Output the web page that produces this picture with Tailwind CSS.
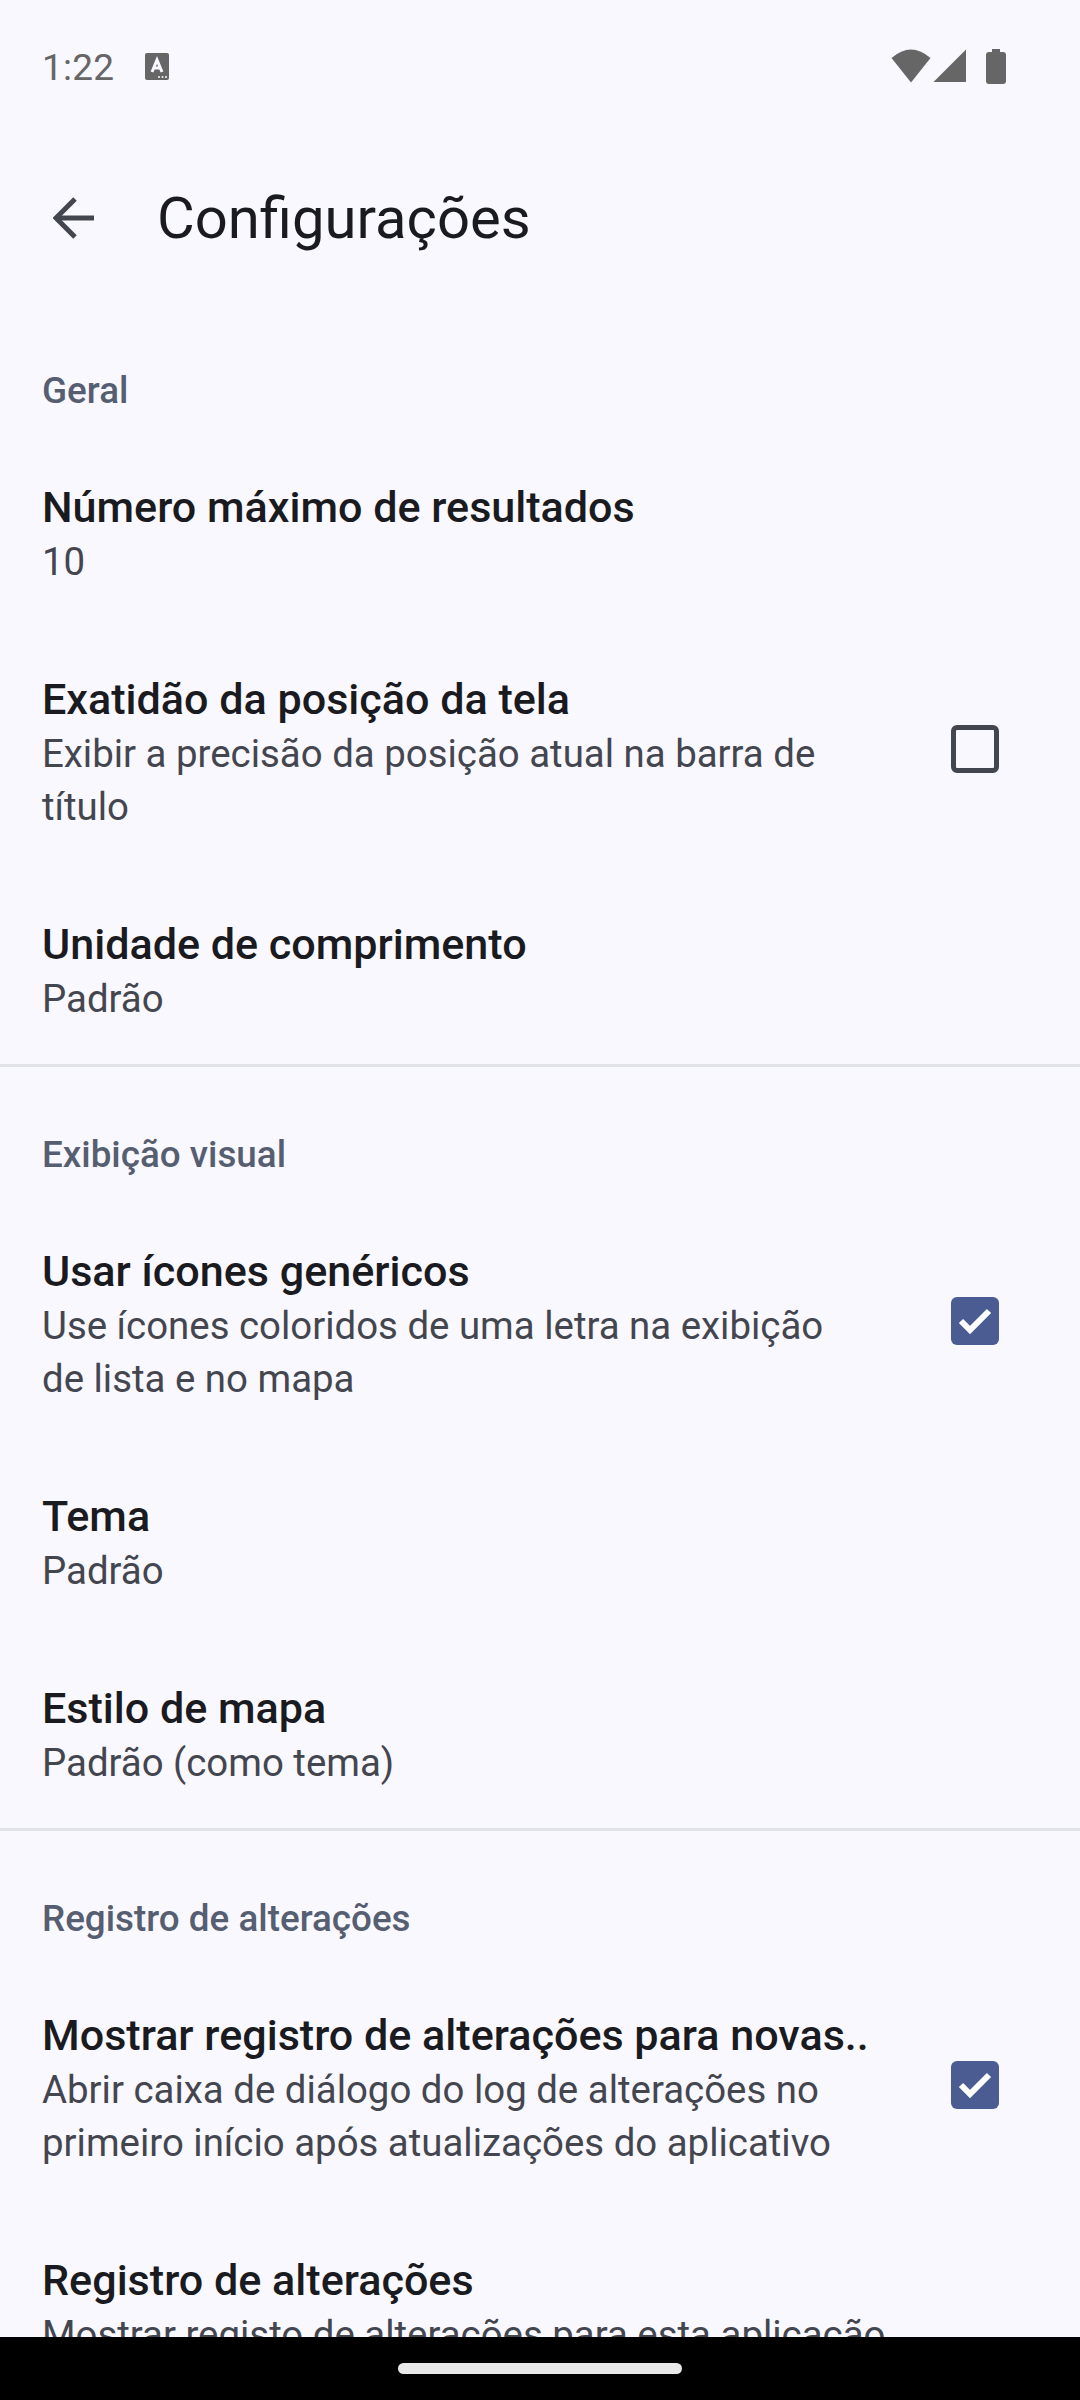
<!DOCTYPE html>
<html lang="pt">
<head>
    <meta charset="UTF-8">
    <meta name="viewport" content="width=device-width, initial-scale=1.0">
    <title>Configurações</title>
    <script src="https://cdn.jsdelivr.net/npm/@tailwindcss/browser@4"></script>
</head>
<body class="m-0 bg-[#faf8ff] font-['Roboto',sans-serif]">
    <div class="w-[1080px] h-[2400px] flex flex-col overflow-hidden bg-[#faf8ff]">
        <!-- status bar -->
        <div class="h-[132px] shrink-0 flex items-center pl-[42px] pr-[74px] text-[#666666]">
            <span class="text-[37px] leading-none tracking-[0.2px] mt-[2px]">1:22</span>
            <svg class="ml-[31px]" width="24" height="27" viewBox="0 0 24 27">
                <rect width="24" height="27" rx="2" fill="#666666"/>
                <path d="M7 19 L12 7 L17 19 M8.600 15 H15.400" fill="none" stroke="#faf8ff" stroke-width="3"/>
                <circle cx="14" cy="24" r="1" fill="#faf8ff"/>
                <circle cx="17.500" cy="24" r="1" fill="#faf8ff"/>
                <circle cx="21" cy="24" r="1" fill="#faf8ff"/>
            </svg>
            <div class="ml-auto flex items-center">
                <svg width="40" height="34" viewBox="0 0 40 34"><path d="M0.500 9 Q20 -8 39.500 9 L20 33.500 Z" fill="#666666"/></svg>
                <svg class="ml-[2px]" width="34" height="34" viewBox="0 0 34 34"><path d="M33 0.500 V33 H0.500 Z" fill="#666666"/></svg>
                <svg class="ml-[19px]" width="20" height="35" viewBox="0 0 20 35"><path d="M6 0 H14 V3 H17 Q20 3 20 6 V32 Q20 35 17 35 H3 Q0 35 0 32 V6 Q0 3 3 3 H6 Z" fill="#666666"/></svg>
            </div>
        </div>

        <!-- toolbar -->
        <div class="h-[171px] shrink-0 flex items-center pl-[53px]">
            <svg width="42" height="42" viewBox="0 0 42 42" fill="none" stroke="#44464f" stroke-width="5">
                <path d="M41 21 H4"/>
                <path d="M22 2 L3 21 L22 40"/>
            </svg>
            <h1 class="ml-[62px] text-[58px] leading-none text-[#1a1b20] font-normal">Configurações</h1>
        </div>

        <!-- settings list -->
        <div class="flex-1 overflow-hidden">
            <section class="border-b-[3px] border-[#e2e2e9] pb-[1px]">
                <h2 class="pl-[42px] pt-[65px] h-[136px] text-[36.8px] leading-[46px] font-medium text-[#565e71]">Geral</h2>
                <div class="pl-[42px] pr-[81px] pt-[42px] pb-[43px] flex items-center">
                    <div class="flex-1 min-w-0">
                        <div class="text-[43.1px] leading-[54px] font-medium text-[#1a1b20]">Número máximo de resultados</div>
                        <div class="text-[38.4px] leading-[53px] text-[#44464f]">10</div>
                    </div>
                </div>
                <div class="pl-[42px] pr-[81px] pt-[42px] pb-[43px] flex items-center">
                    <div class="flex-1 min-w-0 pr-[90px]">
                        <div class="text-[43.1px] leading-[54px] font-medium text-[#1a1b20]">Exatidão da posição da tela</div>
                        <div class="text-[38.4px] leading-[53px] text-[#44464f]">Exibir a precisão da posição atual na barra de título</div>
                    </div>
                    <div class="w-[48px] h-[48px] shrink-0 mb-[8px] rounded-[6px] border-[5px] border-[#44464f]"></div>
                </div>
                <div class="pl-[42px] pr-[81px] pt-[42px] pb-[38px] flex items-center">
                    <div class="flex-1 min-w-0">
                        <div class="text-[43.1px] leading-[54px] font-medium text-[#1a1b20]">Unidade de comprimento</div>
                        <div class="text-[38.4px] leading-[53px] text-[#44464f]">Padrão</div>
                    </div>
                </div>
            </section>

            <section class="border-b-[3px] border-[#e2e2e9] pb-[1px]">
                <h2 class="pl-[42px] pt-[65px] h-[136px] text-[36.8px] leading-[46px] font-medium text-[#565e71]">Exibição visual</h2>
                <div class="pl-[42px] pr-[81px] pt-[42px] pb-[43px] flex items-center">
                    <div class="flex-1 min-w-0 pr-[90px]">
                        <div class="text-[43.1px] leading-[54px] font-medium text-[#1a1b20]">Usar ícones genéricos</div>
                        <div class="text-[38.4px] leading-[53px] text-[#44464f]">Use ícones coloridos de uma letra na exibição de lista e no mapa</div>
                    </div>
                    <div class="w-[48px] h-[48px] shrink-0 mb-[8px] rounded-[6px] bg-[#4a5c92] flex items-center justify-center">
                        <svg width="34" height="26" viewBox="0 0 34 26" fill="none" stroke="#ffffff" stroke-width="6"><path d="M3 13 L12 22 L31 3"/></svg>
                    </div>
                </div>
                <div class="pl-[42px] pr-[81px] pt-[42px] pb-[43px] flex items-center">
                    <div class="flex-1 min-w-0">
                        <div class="text-[43.1px] leading-[54px] font-medium text-[#1a1b20]">Tema</div>
                        <div class="text-[38.4px] leading-[53px] text-[#44464f]">Padrão</div>
                    </div>
                </div>
                <div class="pl-[42px] pr-[81px] pt-[42px] pb-[38px] flex items-center">
                    <div class="flex-1 min-w-0">
                        <div class="text-[43.1px] leading-[54px] font-medium text-[#1a1b20]">Estilo de mapa</div>
                        <div class="text-[38.4px] leading-[53px] text-[#44464f]">Padrão (como tema)</div>
                    </div>
                </div>
            </section>

            <section>
                <h2 class="pl-[42px] pt-[65px] h-[136px] text-[36.8px] leading-[46px] font-medium text-[#565e71]">Registro de alterações</h2>
                <div class="pl-[42px] pr-[81px] pt-[42px] pb-[43px] flex items-center">
                    <div class="flex-1 min-w-0 pr-[90px]">
                        <div class="text-[43.1px] leading-[54px] font-medium text-[#1a1b20] whitespace-nowrap">Mostrar registro de alterações para novas..</div>
                        <div class="text-[38.4px] leading-[53px] text-[#44464f]">Abrir caixa de diálogo do log de alterações no primeiro início após atualizações do aplicativo</div>
                    </div>
                    <div class="w-[48px] h-[48px] shrink-0 mb-[8px] rounded-[6px] bg-[#4a5c92] flex items-center justify-center">
                        <svg width="34" height="26" viewBox="0 0 34 26" fill="none" stroke="#ffffff" stroke-width="6"><path d="M3 13 L12 22 L31 3"/></svg>
                    </div>
                </div>
                <div class="pl-[42px] pr-[81px] pt-[42px] pb-[43px] flex items-center">
                    <div class="flex-1 min-w-0">
                        <div class="text-[43.1px] leading-[54px] font-medium text-[#1a1b20]">Registro de alterações</div>
                        <div class="text-[38.4px] leading-[53px] text-[#44464f]">Mostrar registo de alterações para esta aplicação</div>
                    </div>
                </div>
            </section>
        </div>

        <!-- nav bar -->
        <div class="h-[63px] shrink-0 bg-black flex justify-center pt-[26px]">
            <div class="w-[284px] h-[11px] rounded-full bg-[#e8e8e8]"></div>
        </div>
    </div>
</body>
</html>
